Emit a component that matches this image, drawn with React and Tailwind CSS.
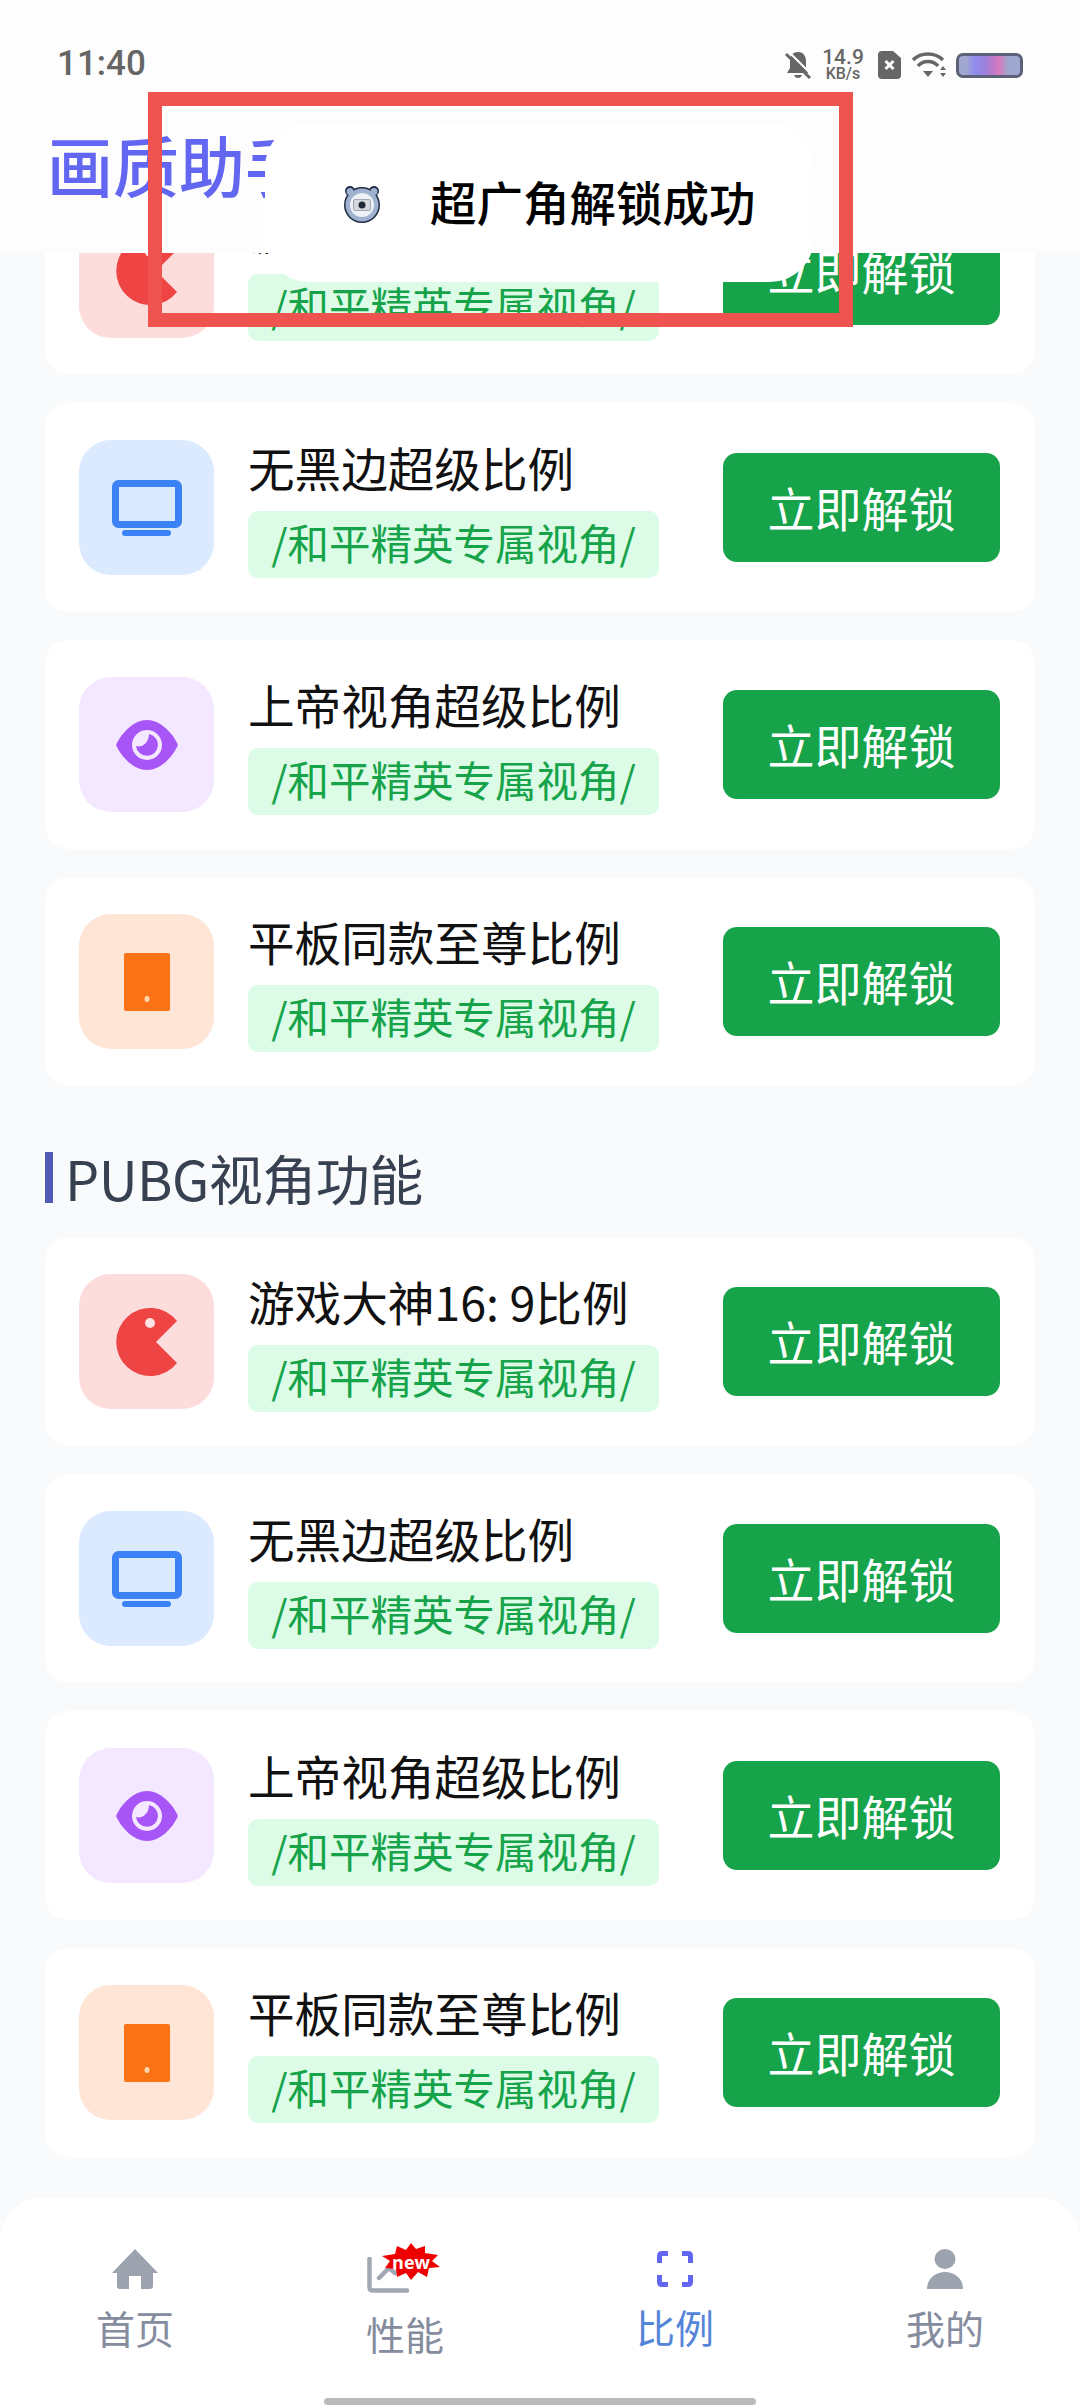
import React from 'react';

const cjk = "font-['Noto_Sans_CJK_SC','Noto_Sans',sans-serif]";

function PacmanIcon() {
  return (
    <svg width="61" height="68" viewBox="0 0 61 68">
      <path d="M61 13 A34 34 0 1 0 61 55 L40 34 Z" fill="#ef4444" />
      <circle cx="34" cy="15" r="5" fill="#fee2e2" />
    </svg>
  );
}

function MonitorIcon() {
  return (
    <svg width="70" height="56" viewBox="0 0 70 56">
      <rect x="3.5" y="3.5" width="63" height="41" rx="3" fill="#dbeafe" stroke="#3b82f6" strokeWidth="7" />
      <rect x="10" y="50" width="49" height="6" rx="3" fill="#3b82f6" />
    </svg>
  );
}

function EyeIcon() {
  return (
    <svg width="62" height="50" viewBox="0 0 62 50">
      <path d="M31 0 C44 0 56 12 62 25 C56 38 44 50 31 50 C18 50 6 38 0 25 C6 12 18 0 31 0 Z" fill="#a855f7" />
      <circle cx="31" cy="25" r="15" fill="#f3e8ff" />
      <path d="M33 14 A11 11 0 1 1 20 26 C27 28 33 22 33 14 Z" fill="#a855f7" />
    </svg>
  );
}

function TabletIcon() {
  return (
    <svg width="46" height="58" viewBox="0 0 46 58">
      <rect width="46" height="58" rx="2" fill="#f97316" />
      <ellipse cx="23" cy="46" rx="2.5" ry="3" fill="#fed7aa" />
    </svg>
  );
}

const features = [
  { title: '游戏大神16: 9比例', box: 'bg-[#fddcdc]', icon: <PacmanIcon /> },
  { title: '无黑边超级比例', box: 'bg-[#dbeafe]', icon: <MonitorIcon /> },
  { title: '上帝视角超级比例', box: 'bg-[#f3e8ff]', icon: <EyeIcon /> },
  { title: '平板同款至尊比例', box: 'bg-[#fee5d5]', icon: <TabletIcon /> },
];

function FeatureCard({ item }) {
  return (
    <div className="flex h-[209px] items-center rounded-[24px] bg-white pl-[34px] pr-[35px]">
      <div className={`flex h-[135px] w-[135px] shrink-0 items-center justify-center rounded-[32px] ${item.box}`}>
        {item.icon}
      </div>
      <div className="ml-[34px] mt-[6px] flex flex-1 flex-col items-start">
        <div className="mt-[-4px] h-[56px] text-[46.6px] leading-[56px] whitespace-nowrap text-[#111111]">{item.title}</div>
        <div className="mt-[16px] flex h-[67px] w-[411px] items-center justify-center rounded-[10px] bg-[#dcfce7] pb-[4px] text-[41.5px] leading-none whitespace-nowrap text-[#16a34a]">
          /和平精英专属视角/
        </div>
      </div>
      <div className="flex h-[109px] w-[277px] shrink-0 items-center justify-center rounded-[14px] bg-[#16a34a] text-[47px] text-white">
        立即解锁
      </div>
    </div>
  );
}

function StatusIcons() {
  return (
    <div className="mt-[3px] flex items-center">
      <svg width="26" height="28" viewBox="0 0 26 28">
        <path d="M13 1 C7 1 5 6 5 10 L5 17 L2 22 L24 22 L21 17 L21 10 C21 6 19 1 13 1 Z M9 24 C10 28 16 28 17 24 Z" fill="#666666" />
        <path d="M1 3 L25 27" stroke="#666666" strokeWidth="3" />
        <path d="M4 1 L26 23" stroke="#ffffff" strokeWidth="2" />
      </svg>
      <div className="ml-[10px] flex w-[44px] flex-col items-center font-['Roboto',sans-serif] font-medium text-[#666666]">
        <span className="text-[21px] leading-[17px]">14.9</span>
        <span className="text-[16px] leading-[15px]">KB/s</span>
      </div>
      <svg className="ml-[13px]" width="23" height="28" viewBox="0 0 23 28">
        <path d="M4 0 L15 0 L23 7 L23 24 Q23 28 19 28 L4 28 Q0 28 0 24 L0 4 Q0 0 4 0 Z" fill="#666666" />
        <path d="M7.5 10 L15.5 18 M15.5 10 L7.5 18" stroke="#ffffff" strokeWidth="3" />
      </svg>
      <svg className="ml-[11px]" width="34" height="26" viewBox="0 0 34 26">
        <path d="M1 8 C9 0 23 0 31 8" fill="none" stroke="#666666" strokeWidth="3.5" />
        <path d="M6 14 C11 8 21 8 26 14" fill="none" stroke="#666666" strokeWidth="3.5" />
        <path d="M11 19 L21 19 L16 25 Z" fill="#666666" />
        <path d="M31 14 L34 18 L28 18 Z M28 21 L34 21 L31 25 Z" fill="#666666" />
      </svg>
      <div className="ml-[10px] h-[25px] w-[67px] rounded-[7px] border-[3px] border-[#5b6178] bg-[linear-gradient(90deg,#a0a8cf_0%,#a0a8cf_12%,#8e8cf0_25%,#a07fd8_45%,#d878c0_65%,#a0a8cf_80%)]" />
    </div>
  );
}

const tabs = [
  { label: '首页', icon: 'home', color: 'text-[#858c9e]', labelTop: 'mt-[15px]' },
  { label: '性能', icon: 'chart', color: 'text-[#858c9e]', labelTop: 'mt-[21px]' },
  { label: '比例', icon: 'frame', color: 'text-[#5585d8]', labelTop: 'mt-[14px]' },
  { label: '我的', icon: 'user', color: 'text-[#858c9e]', labelTop: 'mt-[15px]' },
];

function TabIcon({ name }) {
  if (name === 'home') {
    return (
      <svg width="46" height="40" viewBox="0 0 46 40">
        <path d="M23 0 L46 24 L41 24 L41 37 Q41 40 38 40 L29 40 L29 27 L17 27 L17 40 L8 40 Q5 40 5 37 L5 24 L0 24 Z" fill="#9ca3af" />
      </svg>
    );
  }
  if (name === 'chart') {
    return (
      <div className="relative h-[40px] w-[76px]">
        <svg className="absolute left-0 top-[8px]" width="42" height="36" viewBox="0 0 42 36">
          <path d="M2.5 2 L2.5 30 Q2.5 33.5 6 33.5 L40 33.5" fill="none" stroke="#a3a7b3" strokeWidth="4.5" strokeLinecap="round" />
          <path d="M12 21 L22 11 L28 16" fill="none" stroke="#a3a7b3" strokeWidth="4.5" strokeLinecap="round" />
        </svg>
        <div className="absolute left-[15px] top-[-6px] flex h-[37px] w-[58px] items-center justify-center">
          <svg className="absolute inset-0" width="58" height="37" viewBox="0 0 58 37">
            <polygon points="29,0 34,6 43,3 43,10 56,12 50,18 58,24 47,25 45,34 36,29 29,37 24,30 15,34 14,26 3,25 8,18 0,13 13,11 15,3 24,7" fill="#ee0000" />
          </svg>
          <span className="relative font-['Open_Sans',sans-serif] text-[18px] leading-none font-bold text-white">new</span>
        </div>
      </div>
    );
  }
  if (name === 'frame') {
    return (
      <svg width="36" height="36" viewBox="0 0 36 36">
        <path d="M2.5 12 L2.5 5 Q2.5 2.5 5 2.5 L11 2.5 M25 2.5 L31 2.5 Q33.5 2.5 33.5 5 L33.5 12 M33.5 24 L33.5 31 Q33.5 33.5 31 33.5 L25 33.5 M11 33.5 L5 33.5 Q2.5 33.5 2.5 31 L2.5 24" fill="none" stroke="#6366f1" strokeWidth="5" />
      </svg>
    );
  }
  return (
    <svg width="36" height="40" viewBox="0 0 36 40">
      <ellipse cx="18" cy="10" rx="10.5" ry="10" fill="#9ca3af" />
      <path d="M0 40 C0 30 8 23 18 23 C28 23 36 30 36 40 Z" fill="#9ca3af" />
    </svg>
  );
}

export default function App() {
  return (
    <div className={`relative flex h-[2408px] w-[1080px] flex-col overflow-hidden bg-[#f8fafc] ${cjk}`}>
      {/* Header */}
      <header className="z-10 h-[253px] shrink-0 bg-[#fdfdfd]">
        <div className="flex h-[123px] items-start justify-between pl-[57px] pr-[57px] pt-[46px]">
          <span className="font-['Roboto',sans-serif] text-[35px] leading-[36px] font-medium text-[#666666]">11:40</span>
          <StatusIcons />
        </div>
        <h1 className="pl-[47px] text-[66px] leading-[80px] font-medium text-[#6366f1]">画质助手</h1>
      </header>

      {/* Scrolled list */}
      <main className="min-h-0 flex-1 overflow-hidden">
        <div className="mt-[-87px] px-[45px]">
          <div className="flex flex-col gap-[28px]">
            {features.map((f) => <FeatureCard key={f.title} item={f} />)}
          </div>
          <div className="mb-[34px] mt-[66px] flex h-[51px] items-center border-l-[8px] border-[#4f5bb5] pl-[12px] text-[54px] leading-none tracking-[-0.5px] text-[#374151]">
            PUBG视角功能
          </div>
          <div className="flex flex-col gap-[28px]">
            {features.map((f) => <FeatureCard key={f.title} item={f} />)}
          </div>
        </div>
      </main>

      {/* Bottom nav */}
      <nav className="relative h-[211px] shrink-0 rounded-t-[44px] bg-white">
        <div className="grid grid-cols-4 pt-[52px]">
          {tabs.map((t) => (
            <div key={t.label} className="flex flex-col items-center">
              <div className="flex h-[40px] items-center justify-center">
                <TabIcon name={t.icon} />
              </div>
              <span className={`text-[39px] leading-[46px] ${t.color} ${t.labelTop}`}>{t.label}</span>
            </div>
          ))}
        </div>
        <div className="absolute bottom-[3px] left-[324px] h-[7px] w-[432px] rounded-full bg-[#bbbbbb]" />
      </nav>

      {/* Toast */}
      <div className="absolute left-[265px] top-[123px] z-20 flex h-[159px] w-[549px] items-center rounded-[44px] bg-white pl-[78px]">
        <svg className="mt-[2px]" width="38" height="38" viewBox="0 0 38 38">
          <circle cx="7" cy="6" r="5" fill="#1f2c44" />
          <circle cx="31" cy="6" r="5" fill="#1f2c44" />
          <circle cx="19" cy="20" r="18" fill="#1f2c44" />
          <circle cx="7" cy="6.5" r="3.5" fill="#9fb2d0" />
          <circle cx="31" cy="6.5" r="3.5" fill="#9fb2d0" />
          <circle cx="19" cy="20" r="16.5" fill="#9fb2d0" />
          <circle cx="19" cy="20" r="12" fill="#eef2f6" />
          <rect x="10.5" y="14.5" width="17" height="11" rx="1.5" fill="#d4d8dc" stroke="#8a929c" strokeWidth="0.75" />
          <circle cx="19" cy="20" r="3.5" fill="#1f2937" />
        </svg>
        <span className="mb-[3px] ml-[49px] text-[46.5px] leading-none font-medium whitespace-nowrap text-black">超广角解锁成功</span>
      </div>

      {/* Red highlight frame */}
      <div className="absolute left-[148px] top-[92px] z-30 h-[235px] w-[705px] border-[14px] border-[#ef5350]" />
    </div>
  );
}
